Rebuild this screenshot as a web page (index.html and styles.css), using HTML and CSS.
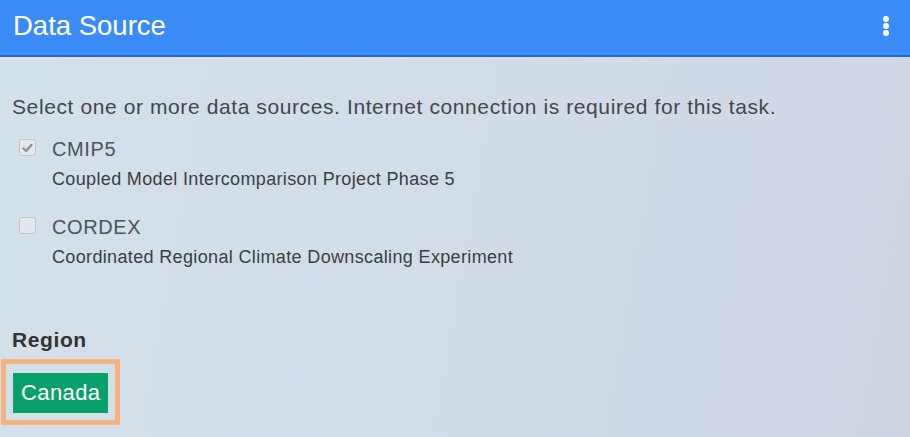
FILE: index.html
```html
<!DOCTYPE html>
<html>
<head>
<meta charset="utf-8">
<link rel="stylesheet" href="styles.css">
</head>
<body>
<div class="panel">
  <header class="bar">
    <h1 class="bar-title">Data Source</h1>
    <svg class="bar-menu" width="10" height="24" viewBox="0 0 10 24">
      <circle cx="5" cy="4" r="3" fill="#fff"/>
      <circle cx="5" cy="11" r="3" fill="#fff"/>
      <circle cx="5" cy="18" r="3" fill="#fff"/>
    </svg>
  </header>
  <main class="content">
    <p class="intro">Select one or more data sources. Internet connection is required for this task.</p>
    <div class="options">
      <label class="option">
        <span class="check checked">
          <svg width="11" height="10" viewBox="0 0 11 10"><path d="M1.5 5.5 L4.2 8 L9.5 1.8" fill="none" stroke="#8a8f94" stroke-width="2.2" stroke-linecap="round" stroke-linejoin="round"/></svg>
        </span>
        <span class="option-text">
          <span class="option-name">CMIP5</span>
          <span class="option-desc">Coupled Model Intercomparison Project Phase 5</span>
        </span>
      </label>
      <label class="option">
        <span class="check"></span>
        <span class="option-text">
          <span class="option-name">CORDEX</span>
          <span class="option-desc">Coordinated Regional Climate Downscaling Experiment</span>
        </span>
      </label>
    </div>
    <h2 class="region-title">Region</h2>
    <div class="highlight">
      <button class="region-btn">Canada</button>
    </div>
  </main>
</div>
</body>
</html>
```
FILE: styles.css
```css
html, body {
  margin: 0;
  padding: 0;
}
body {
  width: 910px;
  height: 437px;
  overflow: hidden;
  font-family: "Liberation Sans", Arial, sans-serif;
  background: linear-gradient(100deg, #d3e1ea 0%, #d1dce7 55%, #cfd7e3 100%);
}
.panel {
  display: flex;
  flex-direction: column;
  height: 437px;
}
.bar {
  height: 55px;
  background: #3b8bf7;
  border-bottom: 2px solid #2769cc;
  display: flex;
  align-items: center;
  justify-content: space-between;
  padding: 0 19px 0 13px;
}
.bar-title {
  margin: 0;
  font-size: 27.5px;
  font-weight: normal;
  color: #fff;
  line-height: 30px;
  margin-top: -3px;
}
.bar-menu {
  display: block;
  margin-top: -2px;
}
.content {
  padding: 0 12px;
}
.intro {
  margin: 38px 0 0;
  font-size: 21px;
  letter-spacing: 0.6px;
  line-height: 24px;
  color: #444749;
}
.options {
  display: flex;
  flex-direction: column;
  gap: 25px;
  margin-top: 18px;
}
.option {
  display: flex;
  gap: 16px;
  padding-left: 7px;
}
.check {
  width: 17px;
  height: 17px;
  flex: none;
  box-sizing: border-box;
  border: 1px solid #bfc5ca;
  border-radius: 3px;
  background: #e3e8ec;
  display: flex;
  align-items: center;
  justify-content: center;
  margin-top: 2px;
}
.option-text {
  display: flex;
  flex-direction: column;
  gap: 7px;
}
.option-name {
  font-size: 20px;
  letter-spacing: 0.6px;
  line-height: 24px;
  color: #505356;
}
.option-desc {
  font-size: 18px;
  letter-spacing: 0.35px;
  line-height: 22px;
  color: #3b3e41;
}
.region-title {
  margin: 60px 0 0;
  font-size: 21px;
  letter-spacing: 0.6px;
  line-height: 24px;
  font-weight: bold;
  color: #333;
}
.highlight {
  display: inline-flex;
  margin: 7px 0 0 -11px;
  border: 5px solid #f4b283;
  padding: 8px 6px 6px;
}
.region-btn {
  font-family: "Liberation Sans", Arial, sans-serif;
  font-size: 22px;
  letter-spacing: 0.4px;
  color: #fff;
  background: #0aa06e;
  border: 1px solid #cfe6dc;
  height: 42px;
  padding: 0 8px;
  margin: 0;
}
```
